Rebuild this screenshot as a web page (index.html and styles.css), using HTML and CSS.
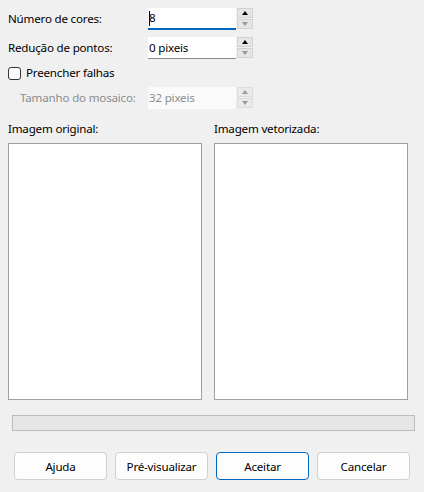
FILE: index.html
```html
<!DOCTYPE html>
<html lang="pt">
<head>
<meta charset="utf-8">
<link rel="stylesheet" href="styles.css">
</head>
<body>
<div class="dialog">
  <div class="settings">
    <div class="row r1">
      <label class="lbl">Número de cores:</label>
      <div class="spin focused">
        <div class="entry"><span class="caret"></span>8</div>
        <div class="btns"><span class="up"></span><span class="down dis"></span></div>
      </div>
    </div>
    <div class="row r2">
      <label class="lbl">Redução de pontos:</label>
      <div class="spin">
        <div class="entry">0 pixeis</div>
        <div class="btns"><span class="up"></span><span class="down dis"></span></div>
      </div>
    </div>
    <div class="row r3">
      <span class="check"></span>
      <label class="lbl">Preencher falhas</label>
    </div>
    <div class="row r4 disabled">
      <label class="lbl indent">Tamanho do mosaico:</label>
      <div class="spin">
        <div class="entry">32 pixeis</div>
        <div class="btns"><span class="up dis"></span><span class="down dis"></span></div>
      </div>
    </div>
  </div>
  <div class="previews">
    <div class="pane">
      <div class="cap">Imagem original:</div>
      <div class="box"></div>
    </div>
    <div class="pane">
      <div class="cap">Imagem vetorizada:</div>
      <div class="box"></div>
    </div>
  </div>
  <div class="progress"></div>
  <div class="buttons">
    <button class="btn">Ajuda</button>
    <button class="btn">Pré-visualizar</button>
    <button class="btn default">Aceitar</button>
    <button class="btn">Cancelar</button>
  </div>
</div>
</body>
</html>
```
FILE: styles.css
```css
html, body {
  margin: 0;
  padding: 0;
  background: #f0f0f0;
}
body {
  width: 424px;
  height: 492px;
  font-family: "Noto Sans", "Open Sans", sans-serif;
  font-size: 11.6px;
  letter-spacing: -0.2px;
  color: #000;
}
.dialog {
  display: flex;
  flex-direction: column;
  padding: 8px 0 0 0;
}
.settings {
  display: flex;
  flex-direction: column;
  padding-left: 8px;
}
.row {
  display: flex;
  align-items: center;
}
.r1 { height: 22px; }
.r2 { height: 22px; margin-top: 7px; }
.r3 { height: 20px; margin-top: 4px; }
.r4 { height: 22px; margin-top: 4px; }
.lbl {
  width: 140px;
  white-space: nowrap;
  line-height: 16px;
}
.lbl.indent {
  padding-left: 12px;
  width: 128px;
}
.r3 .lbl { width: auto; margin-left: 5px; }
.spin {
  display: flex;
  width: 105px;
  height: 22px;
  box-sizing: border-box;
}
.entry {
  flex: 1;
  background: #fff;
  border-bottom: 1px solid #8a8a8a;
  display: flex;
  align-items: center;
  padding-left: 1px;
  line-height: 16px;
  position: relative;
}
.spin.focused .entry {
  border-bottom: 2px solid #0067c0;
  height: 20px;
}
.caret {
  display: inline-block;
  width: 1px;
  height: 15px;
  background: #000;
  margin-right: -1px;
}
.btns {
  width: 16px;
  margin-left: 1px;
  display: flex;
  flex-direction: column;
  gap: 1px;
  padding-bottom: 1px;
}
.btns span {
  flex: 1;
  background: #e5e5e5;
  border: 1px solid #d2d2d2;
  position: relative;
}
.btns span::after {
  content: "";
  position: absolute;
  left: 50%;
  top: 50%;
  transform: translate(-50%, -50%);
  width: 0;
  height: 0;
  border-left: 3.5px solid transparent;
  border-right: 3.5px solid transparent;
}
.btns .up::after { border-bottom: 4px solid #000; }
.btns .down::after { border-top: 4px solid #000; }
.btns .up.dis::after { border-bottom-color: #9a9a9a; }
.btns .down.dis::after { border-top-color: #9a9a9a; }
.disabled .btns span { background: #eaeaea; border-color: #dcdcdc; }
.check {
  width: 13px;
  height: 13px;
  border: 1px solid #333;
  border-radius: 3px;
  background: #fbfbfb;
  box-sizing: border-box;
}
.disabled .lbl, .disabled .entry { color: #8d8d8d; }
.disabled .entry { background: #fafafa; border-bottom: none; }

.previews {
  display: flex;
  gap: 12px;
  padding: 0 8px;
  margin-top: 10px;
}
.pane {
  display: flex;
  flex-direction: column;
  width: 194px;
}
.cap {
  line-height: 16px;
  height: 16px;
  margin-top: 2px;
  margin-bottom: 6px;
}
.box {
  height: 257px;
  box-sizing: border-box;
  background: #fff;
  border: 1px solid #a0a0a0;
}
.progress {
  margin: 15px 0 0 12px;
  width: 403px;
  height: 16px;
  box-sizing: border-box;
  border: 1px solid #bcbcbc;
  background: #e6e6e6;
}
.buttons {
  display: flex;
  gap: 8px;
  padding-left: 14px;
  margin-top: 21px;
}
.btn {
  width: 93px;
  height: 28px;
  box-sizing: border-box;
  font-family: inherit;
  font-size: 11.6px;
  letter-spacing: -0.2px;
  color: #000;
  background: #fdfdfd;
  border: 1px solid #d0d0d0;
  border-radius: 4px;
  padding: 0;
}
.btn.default {
  border-color: #0067c0;
}
```
